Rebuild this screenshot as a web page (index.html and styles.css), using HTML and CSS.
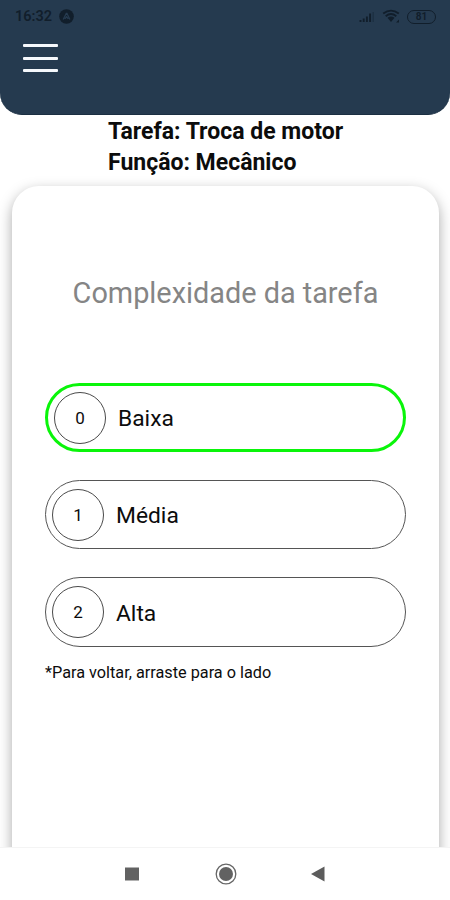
FILE: index.html
```
<!DOCTYPE html>
<html lang="pt">
<head>
<meta charset="utf-8">
<title>Complexidade da tarefa</title>
<link rel="stylesheet" href="styles.css">
</head>
<body>
<div class="screen">
  <header class="header">
    <div class="status">
      <span class="time">16:32</span>
      <svg class="app-icon" width="15" height="15" viewBox="0 0 15 15"><circle cx="7.5" cy="7.5" r="7.3" fill="#111e2b"/><path d="M4.2 10.5 7.3 4.3h.6l3 6.2M5.8 9.9l1.8-2.1 1.7 2.1" fill="none" stroke="#263b50" stroke-width="1.3"/></svg>
      <svg class="signal" width="16" height="12" viewBox="0 0 16 12"><path d="M1.5 9v2M4.7 7.5V11M7.9 5.5V11M11.1 2.5V11" stroke="#111e2b" stroke-width="1.9"/><path d="M14.2 1v10" stroke="#1c2f41" stroke-width="1.3"/></svg>
      <svg class="wifi" width="19" height="15" viewBox="0 0 19 15"><path d="M1.2 4.6Q9-1.3 16.8 4.6M3.7 7.2Q9 3 14.3 7.2" fill="none" stroke="#111e2b" stroke-width="1.9"/><path d="M5.5 8.8Q9 6.4 12.5 8.8L9 13z" fill="#111e2b"/><path d="m14 13.5 3-3v3z" fill="#111e2b"/></svg>
      <span class="battery">81</span>
    </div>
    <div class="menu"><i></i><i></i><i></i></div>
  </header>
  <div class="info"><p class="task">Tarefa: Troca de motor</p><p class="role">Função: Mecânico</p></div>
  <main class="content">
    <section class="card">
      <h1 class="title">Complexidade da tarefa</h1>
      <div class="options">
        <div class="option selected"><span class="num">0</span><span class="label">Baixa</span></div>
        <div class="option"><span class="num">1</span><span class="label">Média</span></div>
        <div class="option"><span class="num">2</span><span class="label">Alta</span></div>
      </div>
      <p class="hint">*Para voltar, arraste para o lado</p>
    </section>
  </main>
  <nav class="nav">
    <svg width="14" height="14" viewBox="0 0 14 14"><path d="M0 .5h14v13H0z" fill="#626262"/></svg>
    <svg width="22" height="22" viewBox="0 0 22 22"><circle cx="11" cy="11" r="9.8" fill="none" stroke="#666" stroke-width="1.3"/><circle cx="11" cy="11" r="7" fill="#626262"/></svg>
    <svg width="14" height="16" viewBox="0 0 14 16"><path d="M0 8 13.5.5v15z" fill="#5c5c5c"/></svg>
  </nav>
</div>
</body>
</html>
```
FILE: styles.css
```
* { box-sizing: border-box; }
body { margin: 0; background: #fff; font-family: Roboto, sans-serif; color: #0c0c0c; }
p, h1 { margin: 0; font-weight: 400; white-space: nowrap; }
svg { display: block; flex: none; }
.screen { width: 450px; height: 900px; display: flex; flex-direction: column; overflow: hidden; }
.header { flex: none; height: 115px; background: #253a4f; border-radius: 0 0 22px 22px; border-bottom: 1px solid #1b2f42; }
.status { height: 33px; display: flex; align-items: center; padding: 0 14px 0 15px; color: #111e2b; }
.time { width: 44px; font-size: 14.5px; font-weight: 600; }
.signal { margin-left: auto; margin-right: 7px; }
.wifi { margin-right: 6px; }
.battery { width: 29px; height: 14px; border: 1.5px solid #111e2b; border-radius: 7px; font-size: 10px; font-weight: 700; line-height: 12px; text-align: center; }
.menu { width: 35px; height: 28px; margin: 11px 0 0 23px; display: flex; flex-direction: column; justify-content: space-between; }
.menu i { height: 3px; background: #f5f8fc; border-radius: 1px; }
.info { flex: none; height: 71px; padding: 1px 0 0 108px; font-size: 23px; line-height: 31px; }
.task, .role { font-weight: 700; }
.content { height: 661px; padding: 0 11px 0 12px; clip-path: inset(-30px 0 0 0); }
.card { height: 720px; border-radius: 27px; background: #fff; box-shadow: 0 5px 14px rgba(0, 0, 0, .34); padding: 86px 33px 0 33px; }
.title { height: 42px; line-height: 42px; font-size: 28.85px; color: #858585; text-align: center; }
.options { margin-top: 69px; display: flex; flex-direction: column; gap: 28px; }
.option { height: 69px; display: flex; align-items: center; border: 1px solid #555; border-radius: 35px; padding-left: 6px; }
.option:last-child { height: 70px; }
.option.selected { border: 3px solid #0af50a; }
.num { width: 52px; height: 52px; border: 1.5px solid #4a4a4a; border-radius: 50%; display: flex; align-items: center; justify-content: center; font-size: 17px; }
.label { margin-left: 12px; padding-top: 2px; font-size: 22.8px; }
.hint { margin-top: 15px; font-size: 16.25px; line-height: 22px; }
.nav { flex: none; height: 53px; border-top: 1px solid #f4f4f4; background: #fff; display: flex; align-items: center; padding-left: 125px; }
.nav svg + svg { margin-left: 76px; }
.nav svg + svg + svg { margin-left: 74px; }
```
